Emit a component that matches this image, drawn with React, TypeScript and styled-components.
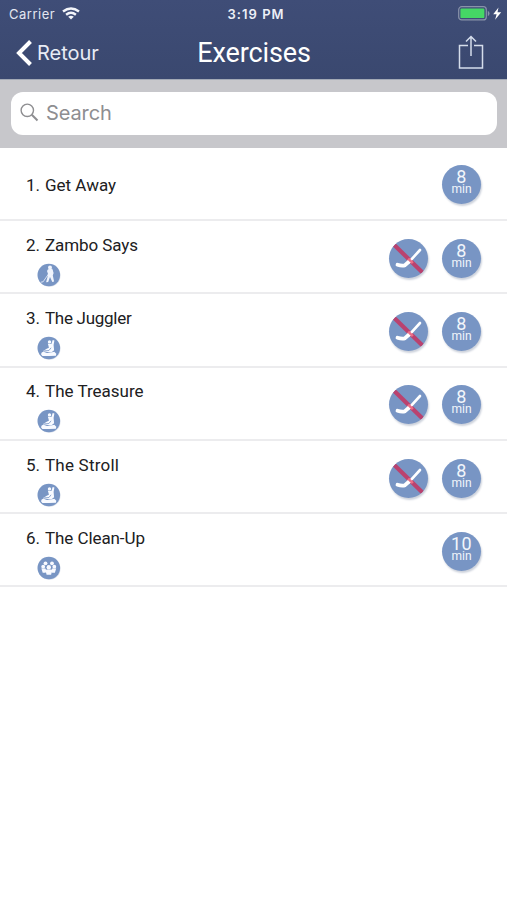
import React from "react";
import styled, { createGlobalStyle } from "styled-components";

const GlobalStyle = createGlobalStyle`
  * { box-sizing: border-box; }
  body { margin: 0; background: #fff; font-family: Roboto, sans-serif; }
`;

const Screen = styled.main`
  width: 507px;
  height: 900px;
  overflow: hidden;
  background: #fff;
`;

const Header = styled.header`
  height: 79px;
  background: linear-gradient(#3f4d77, #3a486f);
  color: #fff;
`;

const StatusBar = styled.div`
  display: grid;
  grid-template-columns: 1fr auto 1fr;
  align-items: center;
  height: 27px;
  padding: 0 5px 0 9px;
  font-family: Inter, sans-serif;
`;

const Carrier = styled.div`
  display: flex;
  align-items: center;
  gap: 7px;
  font-size: 13px;
  letter-spacing: 0.5px;
  color: #e3e7f1;
`;

const Clock = styled.time`
  font-size: 13px;
  font-weight: 600;
  letter-spacing: 1.05px;
  margin-left: 1px;
  color: #edf0f7;
`;

const Power = styled.div`
  display: flex;
  justify-content: flex-end;
`;

const NavBar = styled.nav`
  display: grid;
  grid-template-columns: 1fr auto 1fr;
  align-items: center;
  height: 52px;
  padding: 0 22px 0 16px;
`;

const Back = styled.button`
  display: flex;
  align-items: center;
  gap: 5px;
  padding: 0;
  border: 0;
  background: none;
  color: #e8ecf5;
  font: 400 20px Inter, sans-serif;
  letter-spacing: -0.05px;
`;

const Title = styled.h1`
  margin: 0 0 0 7px;
  font-size: 27px;
  line-height: 32px;
  font-weight: 400;
  letter-spacing: -0.1px;
`;

const Share = styled.button`
  justify-self: end;
  padding: 0;
  margin: 0 1px 2px 0;
  border: 0;
  background: none;
  height: 34px;
`;

const SearchBar = styled.div`
  height: 69px;
  padding: 12px 10px 13px 11px;
  background: #c7c7cb;
  border-top: 1px solid #a2a9b5;
`;

const SearchField = styled.label`
  display: flex;
  align-items: center;
  gap: 7px;
  height: 43px;
  padding: 0 0 2px 9px;
  border-radius: 12px;
  background: #fff;
  color: #8e8e91;
  font: 400 20px Inter, sans-serif;
  letter-spacing: -0.1px;
`;

const Row = styled.li<{ $first: boolean }>`
  display: flex;
  align-items: center;
  justify-content: space-between;
  height: ${(p) => (p.$first ? 73 : 73.3)}px;
  padding: ${(p) => (p.$first ? 2 : 3)}px 26px 0 26px;
  border-bottom: 2px solid #ececee;
`;

const List = styled.ul`
  margin: 0;
  padding: 0;
  list-style: none;
`;

const Info = styled.div<{ $single: boolean }>`
  display: flex;
  flex-direction: column;
  gap: 6px;
  padding-top: ${(p) => (p.$single ? 0 : 3)}px;
`;

const Name = styled.div<{ $spacing: number }>`
  display: flex;
  font-size: 17px;
  line-height: 24px;
  color: #202022;
  white-space: nowrap;

  span:first-child { width: 19px; }
  span:last-child { letter-spacing: ${(p) => p.$spacing}px; }
`;

const CategoryIcon = styled.svg`
  display: block;
  width: 24px;
  height: 24px;
  margin-left: 11px;
`;

const Badges = styled.div`
  display: flex;
  gap: 14px;
`;

const Badge = styled.div`
  display: flex;
  flex-direction: column;
  align-items: center;
  width: 39px;
  height: 39px;
  padding-top: 4px;
  border-radius: 50%;
  background: #7895c4;
  box-shadow: 1px 2px 2px #cdd2dc;
  color: #f2f5fb;
`;

const Minutes = styled.span`
  font-size: 18px;
  line-height: 15px;
  letter-spacing: 0.3px;
`;

const Unit = styled.span`
  font-size: 12px;
  line-height: 11px;
`;

const StickBadge = styled(Badge)`
  padding: 0;
  overflow: hidden;
`;

type CategoryKind = "player" | "goalie" | "team";

interface Exercise {
  name: string;
  spacing: number;
  minutes: number;
  category?: CategoryKind;
  noStick?: boolean;
}

const exercises: Exercise[] = [
  { name: "Get Away", spacing: 0, minutes: 8 },
  { name: "Zambo Says", spacing: -0.08, minutes: 8, category: "player", noStick: true },
  { name: "The Juggler", spacing: -0.28, minutes: 8, category: "goalie", noStick: true },
  { name: "The Treasure", spacing: 0, minutes: 8, category: "goalie", noStick: true },
  { name: "The Stroll", spacing: 0.22, minutes: 8, category: "goalie", noStick: true },
  { name: "The Clean-Up", spacing: -0.08, minutes: 10, category: "team" },
];

function Wifi() {
  return (
    <svg width="18" height="13" viewBox="0 0 18 13" fill="none" stroke="#f3f5fa" strokeWidth="2.4">
      <path d="M1 4.5Q9-1.6 17 4.5M4.1 7.8Q9 3.9 13.9 7.8" />
      <path d="M6.2 9.7Q9 7.7 11.8 9.7L9 12.5Z" fill="#f3f5fa" stroke="none" />
    </svg>
  );
}

function Battery() {
  return (
    <svg width="44" height="15" viewBox="0 0 44 15">
      <rect x="0.7" y="0.7" width="27.6" height="13.2" rx="3" fill="none" stroke="#8993aa" strokeWidth="1.2" />
      <rect x="2.4" y="2.5" width="24" height="9.6" rx="1.2" fill="#45d765" />
      <path d="M29.8 5q1.7.3 1.7 2.5t-1.7 2.5Z" fill="#8993aa" />
      <path d="M40.5 1.5L35.2 8.3H38.6l-1.5 5.4 6.1-7.4h-3.7Z" fill="#fff" />
    </svg>
  );
}

function Category({ kind }: { kind: CategoryKind }) {
  return (
    <CategoryIcon viewBox="0 0 24 24">
      <circle cx="12.4" cy="12.7" r="11.1" fill="#dce1eb" />
      <circle cx="11.8" cy="12" r="11.3" fill="#7895c4" />
      {kind === "player" && (
        <g fill="#f0f4fc">
          <circle cx="13" cy="4.4" r="2" />
          <path d="M11 6.2L15.3 5.8l1.3 4.2-.8 2.6 1.3 5.9-1.8.6-2.3-5-1.8 4.9-2.1.3 1.6-6 .3-3.2-1-2Z" />
          <path d="M15.5 7.5L10.8 8.5 11.5 11 6.1 18.8 3.8 19.2" fill="none" stroke="#f0f4fc" strokeWidth=".8" />
        </g>
      )}
      {kind === "goalie" && (
        <g fill="#f8faff">
          <circle cx="12.5" cy="5.9" r="1.7" />
          <path d="M10.8 7.8l3.6.2 1.3-4 1.7.4-.8 4.6.5 5.2-2.9 2.2-5.3-.6-3.1-.5 3.9-2.5 2.2-1.1-.5-2.1Z" />
          <path d="M4 18.3Q4.3 15.6 6.5 15.8l3.5 1.3 4-.6 3.3-.7 2 2-.4 1.9-7 .3-6.5-.1Z" />
          <path d="M7.2 14.9l4.7-.4 2.2-2.7" fill="none" stroke="#7895c4" strokeWidth=".8" />
        </g>
      )}
      {kind === "team" && (
        <g fill="#f8faff">
          <circle cx="8.5" cy="7.3" r="1.9" />
          <circle cx="15" cy="7.3" r="1.9" />
          <circle cx="6.2" cy="10.7" r="1.9" />
          <circle cx="17.3" cy="10.7" r="1.9" />
          <circle cx="11.8" cy="11.2" r="2.2" />
          <path d="M4.4 12.6l4-.1 1 1.9-.8 2.3H5.7ZM15.2 12.5l4 .1-1.3 4.1H15l-.8-2.3ZM9.4 13.6h4.8l.8 1.7-.9 3.4H9.6l-.9-3.4Z" />
        </g>
      )}
    </CategoryIcon>
  );
}

function NoStick() {
  return (
    <StickBadge>
      <svg width="39" height="39" viewBox="0 0 39 39" fill="none">
        <path d="M5.3 6L33.5 33.6" stroke="#ba426f" strokeWidth="4.2" />
        <path d="M31 11L20.2 22.8" stroke="#fff" strokeWidth="2.6" strokeLinecap="round" />
        <path d="M20.7 22L16 26.2Q13.4 27.4 8.5 25.8" stroke="#fff" strokeWidth="3.8" strokeLinecap="round" strokeLinejoin="round" />
        <path d="M19.2 19.6L23.8 24.1" stroke="#ec6d86" strokeWidth="2.6" />
      </svg>
    </StickBadge>
  );
}

export default function App() {
  return (
    <Screen>
      <GlobalStyle />
      <Header>
        <StatusBar>
          <Carrier>Carrier <Wifi /></Carrier>
          <Clock>3:19 PM</Clock>
          <Power><Battery /></Power>
        </StatusBar>
        <NavBar>
          <Back>
            <svg width="16" height="26" viewBox="0 0 16 26" fill="none">
              <path d="M14.5 1.5L3 13l11.5 11.5" stroke="#fff" strokeWidth="4" />
            </svg>
            Retour
          </Back>
          <Title>Exercises</Title>
          <Share aria-label="Share">
            <svg width="26" height="34" viewBox="0 0 26 34" fill="none" stroke="#d5ddeb" strokeWidth="1.5">
              <path d="M10 10.5H1.5V33h23V10.5H16M13 21V1.5M8 6.5l5-5 5 5" />
            </svg>
          </Share>
        </NavBar>
      </Header>
      <SearchBar>
        <SearchField>
          <svg width="19" height="19" viewBox="0 0 19 19" fill="none" stroke="#8e8e91">
            <circle cx="7.3" cy="7.3" r="6.2" strokeWidth="1.4" />
            <path d="M11.8 11.8l5.7 5.7" strokeWidth="2" />
          </svg>
          Search
        </SearchField>
      </SearchBar>
      <List>
        {exercises.map((exercise, i) => (
          <Row key={exercise.name} $first={i === 0}>
            <Info $single={!exercise.category}>
              <Name $spacing={exercise.spacing}>
                <span>{i + 1}.</span>
                <span>{exercise.name}</span>
              </Name>
              {exercise.category && <Category kind={exercise.category} />}
            </Info>
            <Badges>
              {exercise.noStick && <NoStick />}
              <Badge>
                <Minutes>{exercise.minutes}</Minutes>
                <Unit>min</Unit>
              </Badge>
            </Badges>
          </Row>
        ))}
      </List>
    </Screen>
  );
}
